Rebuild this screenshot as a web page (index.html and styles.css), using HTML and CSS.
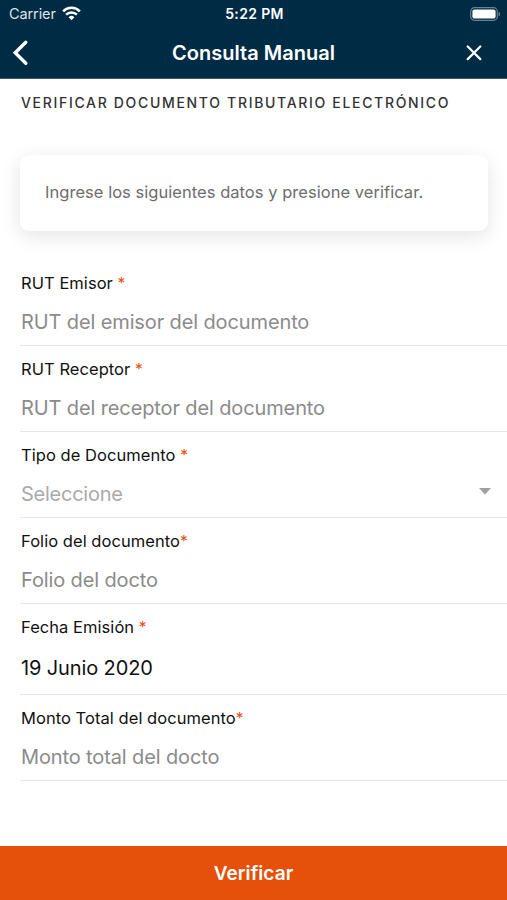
FILE: index.html
```html
<!DOCTYPE html>
<html lang="es">
<head>
<meta charset="utf-8">
<title>Consulta Manual</title>
<link rel="stylesheet" href="styles.css">
</head>
<body>
<div class="screen">
  <header class="header">
    <div class="status">
      <div class="carrier"><span>Carrier</span>
        <svg width="19" height="15" viewBox="0 0 19 15" fill="none" stroke="#fff" stroke-width="2.5"><path d="M1.1 5.3a12 12 0 0 1 16.8 0M4.1 8.6a7.7 7.7 0 0 1 10.8 0"/><path d="M9.5 14.2 6.6 11.2a4.1 4.1 0 0 1 5.8 0z" fill="#fff" stroke="none"/></svg>
      </div>
      <span class="time">5:22 PM</span>
      <svg class="battery" width="31" height="14" viewBox="0 0 31 14"><rect x=".7" y=".7" width="26.6" height="12.6" rx="3.8" fill="none" stroke="#6a8292" stroke-width="1.2"/><rect x="2.4" y="2.4" width="23.2" height="9.2" rx="2.2" fill="#fff"/><path d="M28.6 4.7c2 .8 2 3.8 0 4.6z" fill="#6a8292"/></svg>
    </div>
    <div class="navbar">
      <svg class="back" width="18" height="28" viewBox="0 0 18 28" fill="none" stroke="#fff" stroke-width="3.4" stroke-linecap="round" stroke-linejoin="miter"><path d="M14.8 3.2 4.2 13.7l10.6 10.5"/></svg>
      <h1 class="title">Consulta Manual</h1>
      <svg class="close" width="16" height="16" viewBox="0 0 16 16" fill="none" stroke="#fff" stroke-width="2.2" stroke-linecap="round"><path d="m1.7 1.5 12.6 12.6M14.3 1.5 1.7 14.1"/></svg>
    </div>
  </header>
  <main class="content">
    <h2 class="heading">VERIFICAR DOCUMENTO TRIBUTARIO ELECTRÓNICO</h2>
    <p class="card"><span class="hint">Ingrese los siguientes datos y presione verificar.</span></p>
    <div class="form">
      <div class="field"><div class="label"><span>RUT Emisor <b class="req">*</b></span></div><div class="value"><span>RUT del emisor del documento</span></div></div>
      <div class="field"><div class="label"><span>RUT Receptor <b class="req">*</b></span></div><div class="value"><span>RUT del receptor del documento</span></div></div>
      <div class="field"><div class="label"><span>Tipo de Documento <b class="req">*</b></span></div><div class="value select"><span>Seleccione</span><svg class="caret" width="12" height="7" viewBox="0 0 12 7"><path d="M0 0h12L6 6.5z" fill="#a0a0a0"/></svg></div></div>
      <div class="field"><div class="label"><span>Folio del documento<b class="req">*</b></span></div><div class="value"><span>Folio del docto</span></div></div>
      <div class="field date"><div class="label"><span>Fecha Emisión <b class="req">*</b></span></div><div class="value filled"><span>19 Junio 2020</span></div></div>
      <div class="field"><div class="label"><span>Monto Total del documento<b class="req">*</b></span></div><div class="value"><span>Monto total del docto</span></div></div>
    </div>
  </main>
  <button class="submit">Verificar</button>
</div>
</body>
</html>
```
FILE: styles.css
```css
* { box-sizing: border-box; margin: 0; }
body { font-family: Inter, "Liberation Sans", sans-serif; background: #fff; }
.screen { width: 507px; height: 900px; display: flex; flex-direction: column; overflow: hidden; }
.header { height: 79px; background: #002b45; color: #fff; border-bottom: 1px solid #355a70; }
.status { height: 27px; display: grid; grid-template-columns: 1fr auto 1fr; align-items: center; padding: 0 7px 0 9px; }
.carrier { display: flex; align-items: center; gap: 6px; font-size: 14.5px; letter-spacing: -.1px; color: #dce3e8; }
.time { font-size: 14px; font-weight: 600; letter-spacing: .35px; }
.battery { justify-self: end; margin-right: -1px; }
.navbar { height: 51px; display: grid; grid-template-columns: 1fr auto 1fr; align-items: center; padding: 0 11px; }
.title { font-size: 20px; font-weight: 600; letter-spacing: .03px; }
.close { justify-self: end; margin-right: 14px; }
.content { flex: 1; }
.heading { height: 76px; padding: 14px 0 0 21px; font-size: 14px; line-height: 20px; font-weight: 450; letter-spacing: 1.68px; color: #333; white-space: nowrap; }
.card { margin: 0 19px 0 20px; height: 76px; padding: 0 25px; display: flex; align-items: center; border-radius: 9px; box-shadow: 0 5px 20px rgba(0, 0, 0, .11); color: #6d6d6d; font-size: 16.5px; letter-spacing: .04px; }
.hint { padding-bottom: 2px; }
.form { padding: 29px 0 0 20px; }
.field { height: 86px; border-bottom: 1px solid #e6e6e6; }
.label { height: 46px; padding: 13px 0 0 1px; font-size: 16.5px; line-height: 20px; letter-spacing: .05px; color: #111; }
.value { height: 31px; padding: 0 16px 0 1px; display: flex; align-items: center; font-size: 20px; letter-spacing: -.12px; color: #8b8b8b; }
.select { justify-content: space-between; color: #aaa; letter-spacing: -.25px; }
.caret { margin-bottom: 4px; }
.date { height: 91px; }
.filled { height: 36px; color: #111; }
.req { color: #e8500a; font-weight: 400; font-size: 15.5px; }
.submit { height: 54px; border: 0; background: #e5500a; color: #fff; font: 600 19px Inter, sans-serif; letter-spacing: .1px; }
```
